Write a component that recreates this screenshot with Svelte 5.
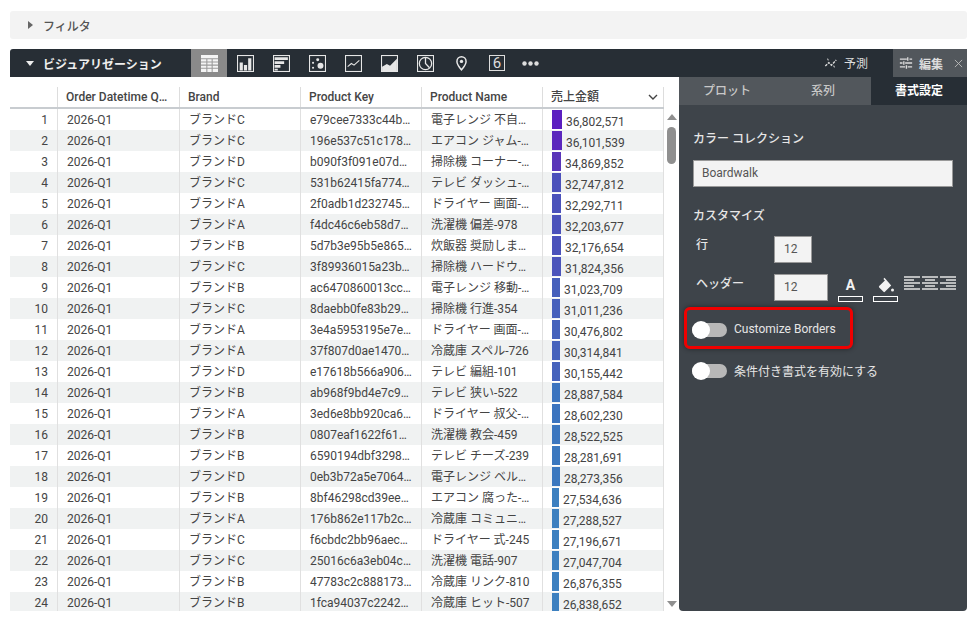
<script>
  const rows = [
    ['ブランドC', 'e79cee7333c44b…', '電子レンジ 不自…', '36,802,571', 10, '#5c1fc0'],
    ['ブランドC', '196e537c51c178…', 'エアコン ジャム-…', '36,101,539', 10, '#5b27bd'],
    ['ブランドD', 'b090f3f091e07d…', '掃除機 コーナー-…', '34,869,852', 9, '#5a35b9'],
    ['ブランドC', '531b62415fa774…', 'テレビ ダッシュ-…', '32,747,812', 9, '#4b50bb'],
    ['ブランドA', '2f0adb1d232745…', 'ドライヤー 画面-…', '32,292,711', 9, '#4b52bb'],
    ['ブランドA', 'f4dc46c6eb58d7…', '洗濯機 偏差-978', '32,203,677', 9, '#4b52bb'],
    ['ブランドB', '5d7b3e95b5e865…', '炊飯器 奨励しま…', '32,176,654', 9, '#4b52bb'],
    ['ブランドC', '3f89936015a23b…', '掃除機 ハードウ…', '31,824,356', 9, '#4b54bb'],
    ['ブランドB', 'ac6470860013cc…', '電子レンジ 移動-…', '31,023,709', 8, '#4660bc'],
    ['ブランドC', '8daebb0fe83b29…', '掃除機 行進-354', '31,011,236', 8, '#4660bc'],
    ['ブランドA', '3e4a5953195e7e…', 'ドライヤー 画面-…', '30,476,802', 8, '#4562bc'],
    ['ブランドA', '37f807d0ae1470…', '冷蔵庫 スペル-726', '30,314,841', 8, '#4562bc'],
    ['ブランドD', 'e17618b566a906…', 'テレビ 編組-101', '30,155,442', 8, '#4562bc'],
    ['ブランドB', 'ab968f9bd4e7c9…', 'テレビ 狭い-522', '28,887,584', 8, '#3b74bf'],
    ['ブランドA', '3ed6e8bb920ca6…', 'ドライヤー 叔父-…', '28,602,230', 8, '#3b74bf'],
    ['ブランドB', '0807eaf1622f61…', '洗濯機 教会-459', '28,522,525', 8, '#3b76bf'],
    ['ブランドB', '6590194dbf3298…', 'テレビ チーズ-239', '28,281,691', 8, '#3b78bf'],
    ['ブランドD', '0eb3b72a5e7064…', '電子レンジ ベル…', '28,273,356', 8, '#3b78bf'],
    ['ブランドB', '8bf46298cd39ee…', 'エアコン 腐った-…', '27,534,636', 7, '#3d80c0'],
    ['ブランドA', '176b862e117b2c…', '冷蔵庫 コミュニ…', '27,288,527', 7, '#3d80c0'],
    ['ブランドC', 'f6cbdc2bb96aec…', 'ドライヤー 式-245', '27,196,671', 7, '#3d80c0'],
    ['ブランドC', '25016c6a3eb04c…', '洗濯機 電話-907', '27,047,704', 7, '#3d80c0'],
    ['ブランドB', '47783c2c888173…', '冷蔵庫 リンク-810', '26,876,355', 7, '#3d80c0'],
    ['ブランドB', '1fca94037c2242…', '冷蔵庫 ヒット-507', '26,838,652', 7, '#3d80c0']
  ];
</script>

<div class="page">
  <div class="filter">
    <span class="tri-right"></span>
    <span>フィルタ</span>
  </div>

  <div class="vis-head">
    <div class="vis-title">
      <span class="tri-down"></span>
      <span>ビジュアリゼーション</span>
    </div>
    <div class="chart-icons">
      <div class="ci active">
        <svg viewBox="0 0 16 16" width="17" height="17"><rect x="0" y="0" width="16" height="16" fill="#f4f4f4" /><path d="M0 3.500h16M0 6.500h16M0 9.500h16M0 12.500h16M5.500 3v13M10.500 3v13" stroke="#9a9a9a" stroke-width="1" /></svg>
      </div>
      <div class="ci">
        <svg viewBox="0 0 16 16" width="17" height="17"><rect x="0.500" y="0.500" width="15" height="15" fill="none" stroke="#e6e6e6" /><path d="M2.500 7h3v7.500h-3zM6.500 9.500h3v5h-3zM10.500 3h3v11.500h-3z" fill="#e6e6e6" /></svg>
      </div>
      <div class="ci">
        <svg viewBox="0 0 16 16" width="17" height="17"><rect x="0.500" y="0.500" width="15" height="15" fill="none" stroke="#e6e6e6" /><path d="M1.500 2h12.500v2.700H1.500zM1.500 5.800h9v2.700h-9zM1.500 9.500h5.500v2.400H1.500zM1.500 13h3v1.500h-3z" fill="#e6e6e6" /></svg>
      </div>
      <div class="ci">
        <svg viewBox="0 0 16 16" width="17" height="17"><rect x="0.500" y="0.500" width="15" height="15" fill="none" stroke="#e6e6e6" /><circle cx="10.800" cy="10.200" r="2.800" fill="#e6e6e6" /><circle cx="8.200" cy="4.400" r="1.400" fill="#e6e6e6" /><circle cx="3.800" cy="7.400" r="1" fill="#e6e6e6" /><circle cx="3.800" cy="12" r="1" fill="#e6e6e6" /></svg>
      </div>
      <div class="ci">
        <svg viewBox="0 0 16 16" width="17" height="17"><rect x="0.500" y="0.500" width="15" height="15" fill="none" stroke="#e6e6e6" /><path d="M2.500 11l3.500-3 2.500 1.500L13.500 5" fill="none" stroke="#e6e6e6" /></svg>
      </div>
      <div class="ci">
        <svg viewBox="0 0 16 16" width="17" height="17"><rect x="0.500" y="0.500" width="15" height="15" fill="none" stroke="#e6e6e6" /><path d="M1 15V11l4.500-2.500 3 1.500L15 3.500V15z" fill="#e6e6e6" /></svg>
      </div>
      <div class="ci">
        <svg viewBox="0 0 16 16" width="17" height="17"><rect x="0.500" y="0.500" width="15" height="15" fill="none" stroke="#e6e6e6" /><circle cx="8" cy="8" r="5.800" fill="none" stroke="#e6e6e6" stroke-width="1.200" /><path d="M8 2.500V8l3.800 4" fill="none" stroke="#e6e6e6" stroke-width="1.200" /></svg>
      </div>
      <div class="ci">
        <svg viewBox="0 0 16 16" width="17" height="17"><path fill-rule="evenodd" d="M8 1a5 5 0 0 0-5 5c0 3.500 5 9 5 9s5-5.500 5-9a5 5 0 0 0-5-5zm0 1.400a3.600 3.600 0 0 1 3.600 3.600c0 2.200-2.400 5.300-3.600 6.800-1.200-1.500-3.600-4.600-3.600-6.800A3.600 3.600 0 0 1 8 2.400z" fill="#e8e8e8" /><circle cx="8" cy="6" r="1.600" fill="#e8e8e8" /></svg>
      </div>
      <div class="ci">
        <span class="six">6</span>
      </div>
      <div class="ci dots">
        <svg viewBox="0 0 17 5" width="17" height="5"><circle cx="2.500" cy="2.500" r="2.200" fill="#ddd" /><circle cx="8.500" cy="2.500" r="2.200" fill="#ddd" /><circle cx="14.500" cy="2.500" r="2.200" fill="#ddd" /></svg>
      </div>
    </div>
    <div class="vis-right">
      <div class="forecast">
        <svg viewBox="0 0 16 16" width="14" height="14"><path d="M1.500 11.500l4-4 3 3 5.500-6" fill="none" stroke="#ddd" stroke-width="1.500" stroke-dasharray="3 1.200" /><path d="M4 3l1 2M11 11l1 2" stroke="#ddd" stroke-width="1.200" /></svg>
        <span>予測</span>
      </div>
      <div class="edit">
        <svg viewBox="0 0 16 16" width="14" height="14"><path d="M1 3.500h8M12 3.500h3M1 8h3M7 8h8M1 12.500h6M10 12.500h5" stroke="#ddd" stroke-width="1.500" /><path d="M10 1.500v4M5.500 6v4M8.500 10.500v4" stroke="#ddd" stroke-width="1.500" /></svg>
        <span>編集</span>
        <svg class="close" viewBox="0 0 10 10" width="9" height="9"><path d="M1 1l8 8M9 1l-8 8" stroke="#bbb" stroke-width="1" /></svg>
      </div>
    </div>
  </div>

  <div class="main">
    <div class="table-wrap">
      <div class="thead">
        <div class="th"></div>
        <div class="th">Order Datetime Q…</div>
        <div class="th">Brand</div>
        <div class="th">Product Key</div>
        <div class="th">Product Name</div>
        <div class="th sales">
          <span>売上金額</span>
          <svg viewBox="0 0 10 6" width="10" height="6"><path d="M1 1l4 4 4-4" fill="none" stroke="#444" stroke-width="1.400" /></svg>
        </div>
      </div>
      <div class="tbody">
        <div class="rows">
          {#each rows as r, i}
            <div class="tr" class:alt={i % 2 === 1}>
              <div class="td idx">{i + 1}</div>
              <div class="td">2026-Q1</div>
              <div class="td">{r[0]}</div>
              <div class="td">{r[1]}</div>
              <div class="td">{r[2]}</div>
              <div class="td value">
                <span class="bar" style="width:{r[4]}px;background:{r[5]}"></span>
                <span class="num">{r[3]}</span>
              </div>
            </div>
          {/each}
        </div>
        <div class="scroll">
          <span class="arrow up"></span>
          <span class="thumb"></span>
          <span class="spacer"></span>
          <span class="arrow down"></span>
        </div>
      </div>
    </div>

    <div class="panel">
      <div class="tabs">
        <div class="tab">プロット</div>
        <div class="tab">系列</div>
        <div class="tab on">書式設定</div>
      </div>
      <div class="panel-body">
        <div class="label first">カラー コレクション</div>
        <div class="select">Boardwalk</div>
        <div class="label second">カスタマイズ</div>
        <div class="opt row1">
          <span class="opt-name">行</span>
          <div class="num-box small">12</div>
        </div>
        <div class="opt row2">
          <span class="opt-name">ヘッダー</span>
          <div class="num-box wide">12</div>
          <div class="swatch text-color">
            <span class="a">A</span>
            <span class="chip"></span>
          </div>
          <div class="swatch fill-color">
            <svg viewBox="0 0 16 16" width="16" height="16"><path d="M6.500 0.800l-1.100 1.100 1.500 1.500L1.200 9.100a1 1 0 0 0 0 1.400l4.300 4.300a1 1 0 0 0 1.400 0l6.300-6.300z" fill="#f2f2f2" /><circle cx="14.500" cy="13" r="1.500" fill="#f2f2f2" /></svg>
            <span class="chip"></span>
          </div>
          <div class="aligns">
            <svg viewBox="0 0 16 14" width="16" height="14"><path d="M0 1h16M0 4h10M0 7h16M0 10h10M0 13h16" stroke="#e4e4e4" stroke-width="1.500" /></svg>
            <svg viewBox="0 0 16 14" width="16" height="14"><path d="M0 1h16M3 4h10M0 7h16M3 10h10M0 13h16" stroke="#e4e4e4" stroke-width="1.500" /></svg>
            <svg viewBox="0 0 16 14" width="16" height="14"><path d="M0 1h16M6 4h10M0 7h16M6 10h10M0 13h16" stroke="#e4e4e4" stroke-width="1.500" /></svg>
          </div>
        </div>
        <div class="toggle-row borders">
          <span class="toggle"><span class="knob"></span></span>
          <span class="toggle-text">Customize Borders</span>
        </div>
        <div class="toggle-row cond">
          <span class="toggle"><span class="knob"></span></span>
          <span class="toggle-text">条件付き書式を有効にする</span>
        </div>
      </div>
      <div class="callout"></div>
    </div>
  </div>
</div>

<style>
  :global(body) {
    margin: 0;
    background: #fff;
  }

  .page {
    width: 977px;
    height: 618px;
    box-sizing: border-box;
    padding: 11px 10px 0;
    overflow: hidden;
    font-family: Roboto, 'Noto Sans CJK JP', sans-serif;
    font-size: 12px;
    color: #444;
  }

  .filter {
    height: 28px;
    background: #f3f3f3;
    border-radius: 3px;
    display: flex;
    align-items: center;
    gap: 10px;
    padding-left: 18px;
    font-weight: 500;
    color: #555;
  }

  .tri-right {
    width: 0;
    height: 0;
    border-left: 5px solid #666;
    border-top: 4px solid transparent;
    border-bottom: 4px solid transparent;
  }

  .vis-head {
    height: 28px;
    margin-top: 10px;
    background: #272e35;
    border-radius: 3px 3px 0 0;
    display: flex;
    align-items: center;
    color: #eee;
  }

  .vis-title {
    width: 181px;
    box-sizing: border-box;
    padding-left: 16px;
    display: flex;
    align-items: center;
    gap: 9px;
    font-weight: 700;
  }

  .tri-down {
    width: 0;
    height: 0;
    border-top: 5px solid #eee;
    border-left: 4px solid transparent;
    border-right: 4px solid transparent;
  }

  .chart-icons {
    display: flex;
    height: 100%;
  }

  .ci {
    width: 36px;
    height: 28px;
    display: flex;
    align-items: center;
    justify-content: center;
  }

  .ci.active {
    background: #8a8a8a;
  }

  .six {
    width: 16px;
    height: 16px;
    box-sizing: border-box;
    border: 1px solid #ddd;
    color: #ddd;
    font-size: 15px;
    line-height: 15px;
    text-align: center;
  }

  .dots {
    margin-left: -3px;
  }

  .vis-right {
    margin-left: auto;
    display: flex;
    align-items: center;
    height: 100%;
  }

  .forecast {
    display: flex;
    align-items: center;
    gap: 6px;
    color: #ddd;
    padding-right: 25px;
    margin-top: -1px;
  }

  .edit {
    width: 74px;
    height: 100%;
    box-sizing: border-box;
    background: #52575c;
    display: flex;
    align-items: center;
    padding-left: 6px;
    gap: 6px;
    color: #ddd;
    font-weight: 700;
  }

  .edit .close {
    margin-left: 5px;
  }

  .main {
    display: flex;
    height: 534px;
  }

  .table-wrap {
    width: 669px;
    background: #fff;
    display: flex;
    flex-direction: column;
  }

  .thead {
    height: 32px;
    box-sizing: border-box;
    padding-top: 10px;
    border-bottom: 2px solid #c8ccd0;
    display: grid;
    grid-template-columns: 48px 122px 121px 121px 121px 121px;
    width: 654px;
  }

  .th {
    border-right: 1px solid #ddd;
    padding-left: 8px;
    font-weight: 500;
    line-height: 20px;
    color: #454545;
    white-space: nowrap;
    overflow: hidden;
  }

  .th.sales {
    display: flex;
    align-items: center;
    justify-content: space-between;
    padding-right: 5px;
  }

  .tbody {
    flex: 1;
    min-height: 0;
    display: flex;
    overflow: hidden;
  }

  .rows {
    width: 654px;
  }

  .tr {
    display: grid;
    grid-template-columns: 48px 122px 121px 121px 121px 121px;
    height: 21px;
    align-items: stretch;
  }

  .tr.alt {
    background: #f0f2f2;
  }

  .td {
    border-right: 1px solid #e0e0e0;
    padding-left: 9px;
    line-height: 23px;
    white-space: nowrap;
    overflow: hidden;
    color: #444;
  }

  .td.idx {
    text-align: right;
    padding: 0 9px 0 0;
  }

  .td.value {
    display: flex;
    align-items: flex-start;
    gap: 4px;
  }

  .bar {
    height: 19px;
    margin-top: 1px;
    flex-shrink: 0;
  }

  .num {
    line-height: 23px;
    margin-top: 2px;
  }

  .scroll {
    flex: 1;
    display: flex;
    flex-direction: column;
    align-items: center;
    padding-top: 5px;
    height: 502px;
    box-sizing: border-box;
    padding-bottom: 4px;
  }

  .arrow {
    width: 0;
    height: 0;
    border-left: 5px solid transparent;
    border-right: 5px solid transparent;
  }

  .arrow.up {
    border-bottom: 6px solid #8f8f8f;
  }

  .arrow.down {
    border-top: 6px solid #8f8f8f;
  }

  .thumb {
    width: 9px;
    height: 37px;
    margin-top: 7px;
    border-radius: 5px;
    background: #8f8f8f;
  }

  .spacer {
    flex: 1;
  }

  .panel {
    position: relative;
    width: 288px;
    background: #3e444a;
    border-radius: 0 0 4px 4px;
    color: #e6e6e6;
  }

  .tabs {
    display: flex;
    height: 28px;
  }

  .tab {
    width: 96px;
    background: #52575c;
    color: #c8c8c8;
    font-weight: 500;
    line-height: 28px;
    text-align: center;
  }

  .tab.on {
    background: #272e35;
    color: #fff;
    font-weight: 700;
    width: 96px;
  }

  .panel-body {
    padding: 0 14px;
  }

  .label {
    line-height: 18px;
    font-weight: 500;
  }

  .label.first {
    margin-top: 25px;
  }

  .label.second {
    margin-top: 20px;
  }

  .select {
    margin-top: 12px;
    height: 27px;
    width: 260px;
    box-sizing: border-box;
    background: #f3f3f3;
    border: 1px solid #999;
    color: #555;
    line-height: 25px;
    padding-left: 8px;
  }

  .opt {
    display: flex;
    align-items: flex-start;
  }

  .opt.row1 {
    margin-top: 11px;
  }

  .opt.row2 {
    margin-top: 11px;
  }

  .opt-name {
    width: 81px;
    flex-shrink: 0;
    box-sizing: border-box;
    padding-left: 3px;
    line-height: 18px;
    font-weight: 500;
  }

  .opt.row2 .opt-name {
    padding-top: 1px;
  }

  .num-box {
    height: 27px;
    flex-shrink: 0;
    box-sizing: border-box;
    background: #f3f3f3;
    border: 1px solid #999;
    color: #555;
    line-height: 25px;
    padding-left: 9px;
  }

  .num-box.small {
    width: 38px;
  }

  .num-box.wide {
    width: 54px;
  }

  .swatch {
    width: 25px;
    height: 28px;
    flex-shrink: 0;
    display: flex;
    flex-direction: column;
    align-items: center;
    justify-content: space-between;
  }

  .swatch.text-color {
    margin-left: 10px;
  }

  .swatch.fill-color {
    margin-left: 10px;
  }

  .swatch.fill-color svg {
    margin-top: 3px;
  }

  .a {
    font-size: 14px;
    font-weight: 700;
    line-height: 22px;
    color: #f2f2f2;
  }

  .chip {
    display: block;
    width: 25px;
    height: 6px;
    box-sizing: border-box;
    border: 1px solid #fff;
    background: #3e444a;
  }

  .aligns {
    display: flex;
    flex-shrink: 0;
    gap: 2px;
    margin-left: 6px;
    padding-top: 2px;
  }

  .toggle-row {
    display: flex;
    align-items: center;
    gap: 7px;
    height: 20px;
  }

  .toggle-text {
    font-weight: 400;
    padding-bottom: 2px;
  }

  .toggle-row.borders {
    margin-top: 18px;
    margin-left: -1px;
  }

  .toggle-row.cond {
    margin-top: 21px;
    margin-left: -1px;
  }

  .toggle {
    position: relative;
    display: block;
    width: 35px;
    height: 14px;
    border-radius: 7px;
    background: #b8b8b8;
  }

  .knob {
    position: absolute;
    left: 0;
    top: -2px;
    width: 18px;
    height: 18px;
    border-radius: 50%;
    background: #fff;
  }

  .callout {
    position: absolute;
    left: 5px;
    top: 230px;
    width: 169px;
    height: 42px;
    box-sizing: border-box;
    border: 3px solid #f00000;
    border-radius: 6px;
    box-shadow: 0 0 5px rgba(0, 0, 0, 0.45);
  }
</style>
